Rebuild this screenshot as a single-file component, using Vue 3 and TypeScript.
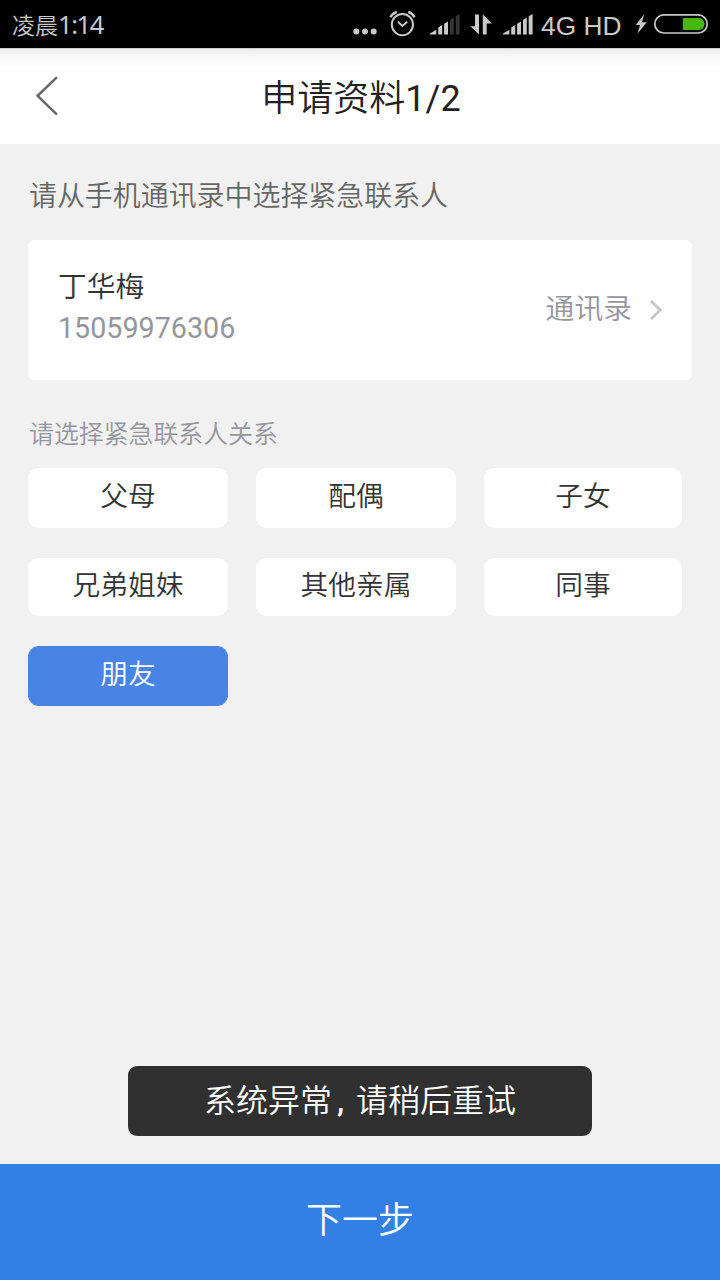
<script setup lang="ts">
import { ref } from 'vue'

interface Contact {
  name: string
  phone: string
}

const contact: Contact = { name: '丁华梅', phone: '15059976306' }
const relations: string[] = ['父母', '配偶', '子女', '兄弟姐妹', '其他亲属', '同事', '朋友']
const selected = ref<string>('朋友')
</script>

<template>
  <div class="screen">
    <div class="status">
      <span class="time">凌晨<span class="digits">1:14</span></span>
      <svg class="icons" width="190" height="48" viewBox="0 0 190 48">
        <g fill="#c9c9c9">
          <circle cx="6.3" cy="31.6" r="3" />
          <circle cx="15" cy="31.6" r="3" />
          <circle cx="23.7" cy="31.6" r="3" />
        </g>
        <g fill="none" stroke="#c9c9c9" stroke-width="2">
          <circle cx="52.4" cy="24.6" r="10.6" />
          <path d="M48 21.8L52.4 26L57.2 21.8" stroke-width="1.9" />
          <path d="M40.4 17.2Q42.3 13.4 46.8 11.8M64.6 17.2Q62.7 13.4 58.2 11.8" stroke-width="2.3" />
        </g>
        <path fill="#c9c9c9" d="M80 34.5V33.6L86.3 29.8V34.5ZM88.2 34.5V27.4L92.2 25V34.5ZM94.1 34.5V23.8L98 21.5V34.5Z" />
        <path fill="#333" d="M100 34.5V19.7L103.8 17.5V34.5ZM105.8 34.5V16.3L109.6 14V34.5Z" />
        <path fill="#c9c9c9" d="M125 14.4H129V34.6L120.3 26.2H125ZM132.8 34.6V14.2L141.8 23.4H136.7V34.6Z" />
        <path fill="#c9c9c9" d="M153 34.5V33.6L159.3 29.8V34.5ZM161.2 34.5V27.4L165.2 25V34.5ZM167.1 34.5V23.8L171 21.5V34.5ZM173 34.5V19.9L176.8 17.5V34.5ZM178.7 34.5V16.3L182.6 14V34.5Z" />
      </svg>
      <span class="network">4G HD</span>
      <svg class="power" width="76" height="48" viewBox="0 0 76 48">
        <path fill="#c9c9c9" d="M10.2 14.2L1.7 25H6L3.6 33.6L12.8 22.3H8Z" />
        <rect x="20.8" y="14.9" width="52.4" height="18.1" rx="9.05" fill="none" stroke="#c9c9c9" stroke-width="1.7" />
        <path fill="#48b908" d="M48.8 18H64.6A6 6 0 0 1 64.6 30H48.8Z" />
      </svg>
    </div>

    <header class="header">
      <svg class="back" width="30" height="44" viewBox="0 0 30 44">
        <path d="M24.2 3.8L5.6 21.8L24.2 39.8" fill="none" stroke="#666" stroke-width="2.5" stroke-linecap="round" />
      </svg>
      <h1 class="title">申请资料<span class="step">1/2</span></h1>
    </header>

    <main class="body">
      <p class="hint">请从手机通讯录中选择紧急联系人</p>
      <section class="card">
        <div class="person">
          <span class="name">{{ contact.name }}</span>
          <span class="phone">{{ contact.phone }}</span>
        </div>
        <div class="book">
          <span class="book-text">通讯录</span>
          <svg class="chevron" width="16" height="24" viewBox="0 0 16 24">
            <path d="M3 3L12.2 12L3 21" fill="none" stroke="#c5c6c9" stroke-width="2.8" />
          </svg>
        </div>
      </section>
      <p class="label">请选择紧急联系人关系</p>
      <div class="relations">
        <button
          v-for="item in relations"
          :key="item"
          class="chip"
          :class="{ active: item === selected }"
          @click="selected = item"
        >
          {{ item }}
        </button>
      </div>
    </main>

    <div class="toast">系统异常<span class="comma">,</span>请稍后重试</div>
    <button class="next">下一步</button>
  </div>
</template>

<style>
body {
  margin: 0;
}
</style>

<style scoped>
.screen {
  width: 720px;
  height: 1280px;
  position: relative;
  display: flex;
  flex-direction: column;
  overflow: hidden;
  background: #f1f1f1;
  font-family: Roboto, 'Noto Sans CJK SC', sans-serif;
  font-weight: 350;
}
.status {
  height: 48px;
  flex: none;
  display: flex;
  align-items: center;
  background: #000;
  color: #c9c9c9;
}
.time {
  width: 338px;
  padding-left: 12px;
  font-size: 23px;
  line-height: 49px;
  white-space: nowrap;
  height: 48px;
}
.digits {
  font-family: 'Noto Sans', sans-serif;
  font-weight: 400;
  font-size: 25.5px;
  letter-spacing: -1.4px;
}
.icons,
.power {
  display: block;
  flex: none;
}
.network {
  width: 94px;
  box-sizing: border-box;
  padding: 4px 0 0 1px;
  font: 400 26.3px/45px 'Liberation Sans', Arial, sans-serif;
  white-space: nowrap;
}
.header {
  height: 96px;
  flex: none;
  display: grid;
  grid-template-columns: 80px 1fr 80px;
  align-items: center;
  background: linear-gradient(#bdbdbd 0, #ededed 1.5px, #f7f7f7 7px, #fff 20px);
}
.back {
  margin-left: 32px;
}
.title {
  margin: 0;
  padding: 5px 0 0 2px;
  text-align: center;
  font-size: 36px;
  line-height: 54px;
  font-weight: 350;
  color: #222;
}
.step {
  font-weight: 400;
}
.body {
  flex: 1;
  padding: 0 28px;
}
.hint {
  box-sizing: border-box;
  margin: 0;
  padding: 32px 0 0 1px;
  height: 96px;
  font-size: 27.95px;
  line-height: 42px;
  color: #666;
}
.card {
  box-sizing: border-box;
  height: 140px;
  padding: 0 28px 0 30px;
  display: flex;
  justify-content: space-between;
  align-items: center;
  border-radius: 6px;
  background: #fff;
  font-size: 28.8px;
  line-height: 42px;
}
.person {
  display: flex;
  flex-direction: column;
  padding-bottom: 5px;
}
.name {
  color: #333;
}
.phone {
  color: #95969d;
  font-weight: 400;
  font-size: 28.7px;
  line-height: 41px;
}
.book {
  display: flex;
  align-items: center;
  gap: 16px;
  color: #95969d;
}
.book-text {
  padding-bottom: 2px;
}
.chevron {
  display: block;
}
.label {
  box-sizing: border-box;
  margin: 0;
  padding: 36px 0 0 1px;
  height: 88px;
  font-size: 24.9px;
  line-height: 38px;
  color: #95969d;
}
.relations {
  display: grid;
  grid-template-columns: 200px 200px 198px;
  grid-template-rows: 60px 58px 60px;
  gap: 30px 28px;
}
.chip {
  border: 0;
  padding: 0 0 3px;
  border-radius: 11px;
  background: #fff;
  color: #333;
  font: inherit;
  font-size: 27.7px;
  line-height: 40px;
}
.chip.active {
  background: #4884e6;
  color: #fff;
}
.toast {
  position: absolute;
  left: 128px;
  top: 1066px;
  width: 464px;
  height: 70px;
  border-radius: 9px;
  background: #303030;
  color: #fff;
  font-size: 32px;
  line-height: 70px;
  text-align: center;
  white-space: nowrap;
}
.comma {
  display: inline-block;
  width: 24px;
  box-sizing: border-box;
  padding-right: 7px;
  font-weight: 500;
}
.next {
  height: 116px;
  flex: none;
  border: 0;
  padding: 0 0 10px;
  background: #3280e6;
  color: #fff;
  font: inherit;
  font-size: 36px;
}
</style>
